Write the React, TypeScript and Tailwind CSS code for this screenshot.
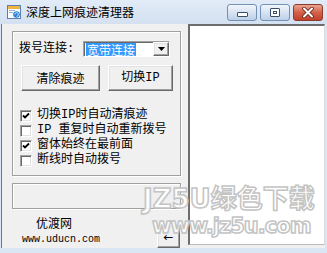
import React from 'react';

const cjk = "font-['Noto_Sans_CJK_SC',sans-serif]";
const mixed = "font-['Liberation_Mono','Noto_Sans_CJK_SC',monospace]";

const Check: React.FC<{ checked: boolean; label: string }> = ({ checked, label }) => (
  <div className="flex items-center h-[15px] pl-[7px]">
    <div className="w-[12px] h-[12px] bg-white border border-t-[#a0a0a0] border-l-[#a0a0a0] border-b-white border-r-white shadow-[inset_1px_1px_0_#696969,inset_-1px_-1px_0_#e3e3e3] flex items-center justify-center">
      {checked && (
        <svg width="8" height="8" viewBox="0 0 8 8">
          <path d="M1 3.5 L3 5.5 L7 1.5" fill="none" stroke="#000" strokeWidth="1.8" />
        </svg>
      )}
    </div>
    <span className={`ml-[5px] text-[12px] leading-[15px] text-black ${mixed}`}>{label}</span>
  </div>
);

const RaisedButton: React.FC<{ className: string; children: React.ReactNode }> = ({ className, children }) => (
  <div
    className={`flex items-center justify-center bg-[#f0f0f0] border border-t-white border-l-white border-b-[#696969] border-r-[#696969] shadow-[inset_-1px_-1px_0_#a0a0a0,inset_1px_1px_0_#e3e3e3] ${className}`}
  >
    {children}
  </div>
);

const CaptionButton: React.FC<{ kind: 'min' | 'max' | 'close' }> = ({ kind }) => {
  if (kind === 'close') {
    return (
      <div className="w-[30px] h-[17px] rounded-[3px] border border-[#8c3a2c] bg-gradient-to-b from-[#eaa48f] via-[#d4604a] to-[#c2402a] flex items-center justify-center">
        <svg width="14" height="11" viewBox="0 0 14 11">
          <path d="M3 1.5 L11 9.5 M11 1.5 L3 9.5" stroke="#5a2218" strokeWidth="3.6" strokeLinecap="round" />
          <path d="M3 1.5 L11 9.5 M11 1.5 L3 9.5" stroke="#fff" strokeWidth="2" strokeLinecap="round" />
        </svg>
      </div>
    );
  }
  return (
    <div className="w-[30px] h-[17px] rounded-[3px] border border-[#7390b5] bg-gradient-to-b from-[#f1f5fb] via-[#d7e3f2] to-[#bdd0e8] flex items-center justify-center">
      {kind === 'min' ? (
        <div className="w-[11px] h-[5px] mt-[3px] bg-white border border-[#3a4e6a] rounded-[1px]" />
      ) : (
        <div className="w-[10px] h-[9px] bg-white border border-[#3a4e6a] rounded-[1px] flex items-center justify-center">
          <div className="w-[4px] h-[3px] border border-[#3a4e6a]" />
        </div>
      )}
    </div>
  );
};

export default function App() {
  return (
    <div className={`relative w-[327px] h-[253px] overflow-hidden bg-[#dae6f4] flex flex-col ${cjk}`}>
      {/* title bar */}
      <div className="h-[24px] flex items-center bg-gradient-to-b from-[#e2ebf7] to-[#d4e1f1]">
        <svg className="ml-[7px]" width="14" height="14" viewBox="0 0 14 14">
          <rect x="0.5" y="0.5" width="13" height="13" fill="#fff" stroke="#5b7fae" />
          <rect x="1" y="1" width="12" height="3" fill="#f2b640" />
          <rect x="2" y="5" width="6" height="1" fill="#9bb3d3" />
          <rect x="2" y="7" width="4" height="1" fill="#9bb3d3" />
          <circle cx="9.5" cy="9.5" r="3.3" fill="#2f82d6" />
          <path d="M7.8 9.5 A1.8 1.8 0 1 1 9.5 11.3" fill="none" stroke="#bfe3ff" strokeWidth="1" />
        </svg>
        <span className="ml-[5px] text-[12px] leading-[16px] text-black">深度上网痕迹清理器</span>
        <div className="ml-auto mr-[4px] self-start mt-[4px] flex gap-[3px]">
          <CaptionButton kind="min" />
          <CaptionButton kind="max" />
          <CaptionButton kind="close" />
        </div>
      </div>

      {/* client */}
      <div className="h-[224px] ml-[1px] mr-[2px] flex border-l border-[#6b7a8c] bg-[#f0f0f0]">
        <div className="w-[186px] flex flex-col">
          <div className="mt-[7px] ml-[10px] w-[169px] h-[145px] border border-[#a0a0a0] shadow-[inset_1px_1px_0_#fff,1px_1px_0_#fff] flex flex-col">
            <div className="mt-[9px] h-[16px] pl-[6px] flex items-center">
              <span className={`w-[64px] text-[12px] leading-[16px] text-black ${mixed}`}>拨号连接:</span>
              <div className="w-[87px] h-[16px] bg-white flex items-center border border-t-[#a0a0a0] border-l-[#a0a0a0] border-b-white border-r-white shadow-[inset_1px_1px_0_#696969]">
                <span className="ml-[2px] px-[1px] h-[13px] flex items-center bg-[#3399ff] text-white text-[12px] leading-[13px]">宽带连接</span>
                <RaisedButton className="ml-auto w-[16px] h-[14px]">
                  <svg width="7" height="4" viewBox="0 0 7 4">
                    <path d="M0 0 H7 L3.5 4 Z" fill="#000" />
                  </svg>
                </RaisedButton>
              </div>
            </div>
            <div className="mt-[8px] pl-[8px] flex gap-[8px]">
              <RaisedButton className="w-[79px] h-[26px]">
                <span className="text-[12px] text-black">清除痕迹</span>
              </RaisedButton>
              <RaisedButton className="w-[65px] h-[26px]">
                <span className={`text-[12px] text-black ${mixed}`}>切换IP</span>
              </RaisedButton>
            </div>
            <div className="mt-[17px] flex flex-col">
              <Check checked label="切换IP时自动清痕迹" />
              <Check checked={false} label="IP 重复时自动重新拨号" />
              <Check checked label="窗体始终在最前面" />
              <Check checked={false} label="断线时自动拨号" />
            </div>
          </div>

          <div className="mt-[7px] ml-[10px] w-[169px] h-[26px] border border-[#a0a0a0] shadow-[inset_1px_1px_0_#fff,1px_1px_0_#fff]" />

          <div className="flex">
            <div className="flex flex-col">
              <span className="mt-[6px] pl-[34px] text-[12px] leading-[16px] text-black">优渡网</span>
              <span className="mt-[1px] pl-[20px] text-[10px] leading-[16px] text-black font-['Liberation_Mono',monospace]">www.uducn.com</span>
            </div>
            <RaisedButton className="ml-auto mr-[8px] mt-[16px] w-[23px] h-[23px]">
              <span className="text-[12px] leading-[12px] text-black font-['DejaVu_Sans',sans-serif]">←</span>
            </RaisedButton>
          </div>
        </div>

        <div className="flex-1 flex flex-col">
          <div className="h-[221px] bg-white border-t-2 border-l-2 border-t-[#6d6d6d] border-l-[#6d6d6d] border-b border-r border-b-[#bdbdbd] border-r-[#dcdcdc]" />
        </div>
      </div>

      {/* watermark */}
      <div className="absolute left-[143px] top-[183px] pointer-events-none flex flex-col text-white/85 [-webkit-text-stroke:1.5px_#c4c4c4] font-bold font-['DejaVu_Sans','Noto_Sans_CJK_SC',sans-serif]">
        <span className="text-[26px] leading-[32px]">JZ5U绿色下载</span>
        <span className="ml-[9px] text-[21px] leading-[22px] tracking-[-1px]">www.jz5u.com</span>
      </div>
    </div>
  );
}
